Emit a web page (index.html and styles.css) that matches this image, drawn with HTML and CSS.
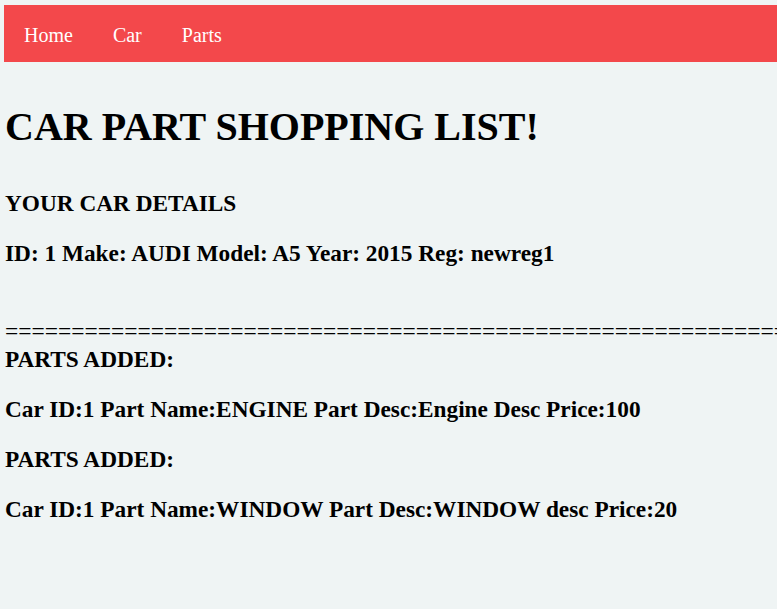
FILE: index.html
```html
<!DOCTYPE html>
<html>
<head>
<meta charset="utf-8">
<link rel="stylesheet" href="styles.css">
</head>
<body>
<nav class="topnav">
  <a href="#" class="nav-link">Home</a>
  <a href="#" class="nav-link">Car</a>
  <a href="#" class="nav-link">Parts</a>
</nav>
<main class="content">
  <h1 class="title">CAR PART SHOPPING LIST!</h1>
  <h3 class="line first">YOUR CAR DETAILS</h3>
  <h3 class="line">ID: 1 Make: AUDI Model: A5 Year: 2015 Reg: newreg1</h3>
  <div class="sep">==================================================================================</div>
  <h3 class="line tight">PARTS ADDED:</h3>
  <h3 class="line">Car ID:1 Part Name:ENGINE Part Desc:Engine Desc Price:100</h3>
  <h3 class="line">PARTS ADDED:</h3>
  <h3 class="line">Car ID:1 Part Name:WINDOW Part Desc:WINDOW desc Price:20</h3>
</main>
</body>
</html>
```
FILE: styles.css
```css
html, body {
  background: #eff4f4;
}
body {
  margin: 5px 0 0 4px;
  font-family: "Liberation Serif", "Times New Roman", serif;
  color: #000;
  overflow: hidden;
}
.topnav {
  background: #f3484b;
  height: 57px;
  display: flex;
  align-items: center;
  padding: 3px 0 0 20px;
  box-sizing: border-box;
}
.nav-link {
  color: #fff;
  text-decoration: none;
  font-size: 20px;
  margin-right: 40px;
}
.content {
  padding-left: 1px;
  overflow: hidden;
}
.title {
  font-size: 40px;
  margin: 42px 0 0 0;
  line-height: 46px;
}
.line {
  font-size: 23.3px;
  line-height: 26px;
  margin: 24px 0 0 0;
}
.first {
  margin-top: 40px;
}
.sep {
  font-size: 23.5px;
  white-space: nowrap;
  margin-top: 55px;
  line-height: 20px;
}
.tight {
  margin-top: 5px;
}
```
